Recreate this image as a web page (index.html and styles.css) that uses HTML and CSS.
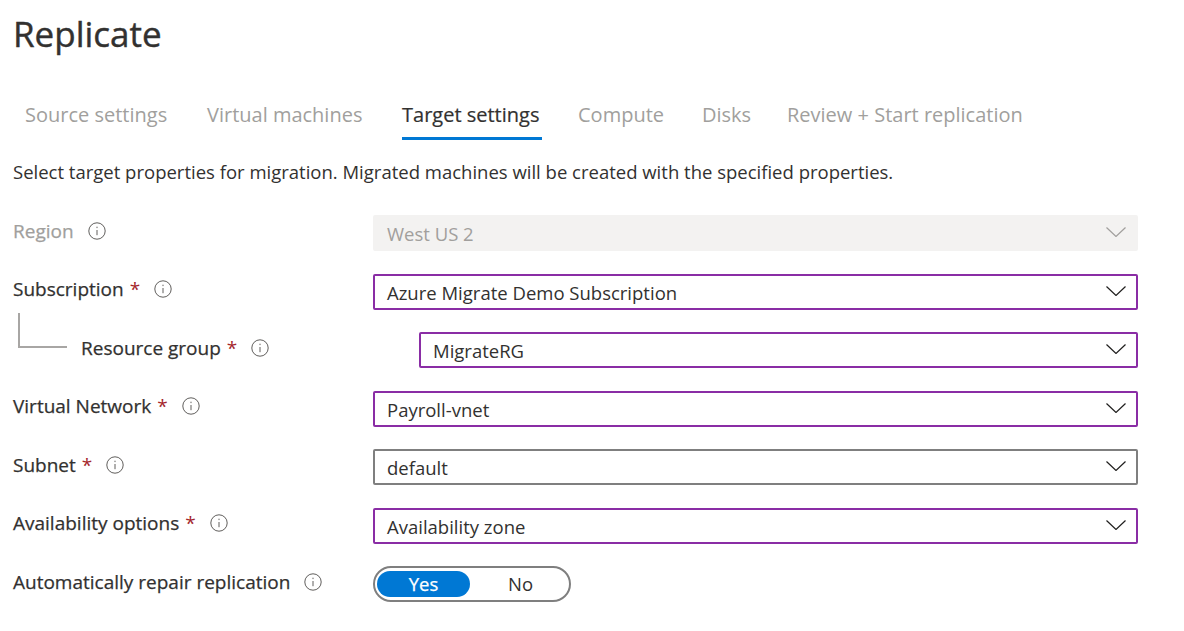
FILE: index.html
```html
<!DOCTYPE html>
<html lang="en">
<head>
    <meta charset="UTF-8">
    <meta name="viewport" content="width=device-width, initial-scale=1.0">
    <title>Replicate</title>
    <link rel="stylesheet" href="styles.css">
</head>
<body>

<div class="page">
    <h1>Replicate</h1>

    <!-- Wizard steps -->
    <div class="tabs">
        <div class="tab tab-source">Source settings</div>
        <div class="tab tab-vm">Virtual machines</div>
        <div class="tab tab-target active">Target settings</div>
        <div class="tab tab-compute">Compute</div>
        <div class="tab tab-disks">Disks</div>
        <div class="tab tab-review">Review + Start replication</div>
    </div>

    <p class="intro">Select target properties for migration. Migrated machines will be created with the specified properties.</p>

    <form class="fields">
        <div class="row">
            <div class="label disabled"><span>Region</span>
                <svg class="info" viewBox="0 0 18 18"><circle cx="9" cy="9" r="8.2"/><path d="M9 8v5.2M9 4.7v1.4"/></svg>
            </div>
            <div class="select select-disabled">West US 2
                <svg class="chevron" viewBox="0 0 20 10"><path d="M.5.5 10 9.5 19.5.5"/></svg>
            </div>
        </div>
        <div class="row">
            <div class="label"><span>Subscription</span><span class="req">*</span>
                <svg class="info" viewBox="0 0 18 18"><circle cx="9" cy="9" r="8.2"/><path d="M9 8v5.2M9 4.7v1.4"/></svg>
            </div>
            <div class="select select-changed">Azure Migrate Demo Subscription
                <svg class="chevron" viewBox="0 0 20 10"><path d="M.5.5 10 9.5 19.5.5"/></svg>
            </div>
        </div>
        <div class="row row-child">
            <div class="label"><span class="tree"></span><span>Resource group</span><span class="req">*</span>
                <svg class="info" viewBox="0 0 18 18"><circle cx="9" cy="9" r="8.2"/><path d="M9 8v5.2M9 4.7v1.4"/></svg>
            </div>
            <div class="select select-changed">MigrateRG
                <svg class="chevron" viewBox="0 0 20 10"><path d="M.5.5 10 9.5 19.5.5"/></svg>
            </div>
        </div>
        <div class="row">
            <div class="label"><span>Virtual Network</span><span class="req">*</span>
                <svg class="info" viewBox="0 0 18 18"><circle cx="9" cy="9" r="8.2"/><path d="M9 8v5.2M9 4.7v1.4"/></svg>
            </div>
            <div class="select select-changed">Payroll-vnet
                <svg class="chevron" viewBox="0 0 20 10"><path d="M.5.5 10 9.5 19.5.5"/></svg>
            </div>
        </div>
        <div class="row">
            <div class="label"><span>Subnet</span><span class="req">*</span>
                <svg class="info" viewBox="0 0 18 18"><circle cx="9" cy="9" r="8.2"/><path d="M9 8v5.2M9 4.7v1.4"/></svg>
            </div>
            <div class="select">default
                <svg class="chevron" viewBox="0 0 20 10"><path d="M.5.5 10 9.5 19.5.5"/></svg>
            </div>
        </div>
        <div class="row">
            <div class="label"><span>Availability options</span><span class="req">*</span>
                <svg class="info" viewBox="0 0 18 18"><circle cx="9" cy="9" r="8.2"/><path d="M9 8v5.2M9 4.7v1.4"/></svg>
            </div>
            <div class="select select-changed">Availability zone
                <svg class="chevron" viewBox="0 0 20 10"><path d="M.5.5 10 9.5 19.5.5"/></svg>
            </div>
        </div>
        <div class="row">
            <div class="label"><span>Automatically repair replication</span>
                <svg class="info" viewBox="0 0 18 18"><circle cx="9" cy="9" r="8.2"/><path d="M9 8v5.2M9 4.7v1.4"/></svg>
            </div>
            <div class="toggle">
                <div class="toggle-on">Yes</div>
                <div class="toggle-off">No</div>
            </div>
        </div>
    </form>
</div>

</body>
</html>
```

FILE: styles.css
```css
body {
    font-family: "Open Sans", "Noto Sans", sans-serif;
    margin: 0;
    padding: 0;
    background-color: white;
    color: #323130;
}
.page {
    padding-left: 13px;
    width: 1125px;
}
h1 {
    margin: 0;
    padding-top: 10px;
    font-size: 35px;
    line-height: 48px;
    font-weight: 400;
    -webkit-text-stroke: 0.4px #323130;
}
.tabs {
    display: flex;
    margin-top: 31px;
    height: 52px;
    font-size: 20px;
    color: #a19f9d;
}
.tab {
    height: 51px;
    padding-top: 12px;
    box-sizing: border-box;
    line-height: 28px;
    white-space: nowrap;
}
.tab-source { margin-left: 12px; width: 182px; }
.tab-vm { width: 195px; }
.tab-target { width: 140px; margin-right: 36px; }
.tab-compute { width: 124px; }
.tab-disks { width: 85px; }
.active {
    color: #323130;
    border-bottom: 3px solid #0078d4;
    -webkit-text-stroke: 0.2px #323130;
}
.intro {
    margin: 0;
    margin-top: 18px;
    font-size: 18.5px;
    line-height: 26px;
}
.fields {
    margin-top: 30.45px;
}
.row {
    display: flex;
    align-items: center;
    height: 36px;
    margin-bottom: 22.45px;
}
.label {
    display: flex;
    align-items: center;
    width: 360px;
    flex-shrink: 0;
    font-size: 19px;
    line-height: 24px;
    margin-top: -5px;
    -webkit-text-stroke: 0.25px #323130;
    white-space: nowrap;
}
.label.disabled {
    color: #a19f9d;
    -webkit-text-stroke: 0.25px #a19f9d;
}
.req {
    color: #a4262c;
    margin-left: 6px;
    -webkit-text-stroke: 0;
}
.info {
    width: 18px;
    height: 18px;
    margin-left: 14px;
    fill: none;
    stroke: #605e5c;
    stroke-width: 1;
}
.select {
    position: relative;
    flex: 1;
    box-sizing: border-box;
    height: 36px;
    border: 2px solid #7f7f7f;
    border-radius: 2px;
    padding-left: 12px;
    font-size: 18.5px;
    line-height: 33px;
    white-space: nowrap;
}
.select-changed {
    border-color: #8a2da5;
}
.select-disabled {
    background-color: #f3f2f1;
    border-color: #f3f2f1;
    color: #a19f9d;
}
.chevron {
    position: absolute;
    right: 10px;
    top: 10px;
    width: 20px;
    height: 10px;
    fill: none;
    stroke: #201f1e;
    stroke-width: 1.2;
}
.select-disabled .chevron {
    stroke: #a19f9d;
}
.row-child .label {
    padding-left: 68px;
    width: 406px;
    box-sizing: border-box;
    position: relative;
}
.tree {
    position: absolute;
    left: 5px;
    top: -23px;
    width: 47px;
    height: 33px;
    border-left: 2px solid #a8a6a4;
    border-bottom: 2px solid #a8a6a4;
}
.toggle {
    display: flex;
    align-items: center;
    box-sizing: border-box;
    width: 198px;
    height: 36px;
    border: 2px solid #7f7f7f;
    border-radius: 18px;
    padding: 0 2px;
    font-size: 18.5px;
}
.toggle-on {
    width: 93px;
    height: 26px;
    line-height: 26px;
    border-radius: 13px;
    background-color: #0078d4;
    color: white;
    text-align: center;
    -webkit-text-stroke: 0.25px white;
}
.toggle-off {
    flex: 1;
    padding-left: 4px;
    text-align: center;
    line-height: 28px;
}
```
